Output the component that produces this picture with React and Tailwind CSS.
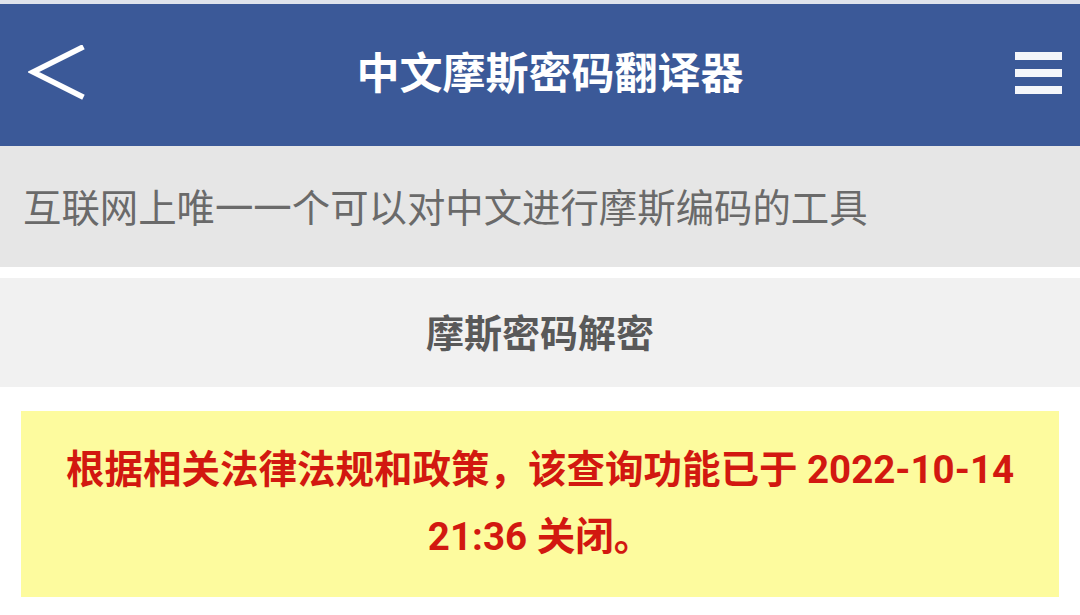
export default function App() {
  const cjk = { fontFamily: "Roboto, 'Noto Sans CJK SC', sans-serif" };
  return (
    <div className="w-[1080px] h-[615px] overflow-hidden bg-white" style={cjk}>
      <div className="h-[4px] bg-[#dfe3ec]" />
      {/* top bar */}
      <header className="h-[142px] bg-[#3b5998] flex items-center text-white">
        <div className="w-[100px] h-full flex items-center pl-[28px] pb-[4px]">
          <svg width="58" height="56" viewBox="0 0 58 56" fill="none">
            <path d="M53 3 L5 27 L53 51" stroke="#ffffff" strokeWidth="5.5" strokeLinecap="square" strokeLinejoin="miter" />
          </svg>
        </div>
        <h1 className="flex-1 text-center text-[43px] leading-[52px] font-bold tracking-[0px] pb-[3px]">
          中文摩斯密码翻译器
        </h1>
        <div className="w-[80px] h-full flex flex-col justify-center items-start gap-[9px] pl-[15px] pb-[4px]">
          <span className="block w-[47px] h-[8px] bg-[#f4f6fa]" />
          <span className="block w-[47px] h-[8px] bg-[#f4f6fa]" />
          <span className="block w-[47px] h-[8px] bg-[#f4f6fa]" />
        </div>
      </header>
      {/* tagline */}
      <div className="h-[121px] bg-[#e6e6e6] flex items-center pl-[23px] pt-[4px]">
        <p className="text-[38.4px] leading-[46px] text-[#6a6a6a]">互联网上唯一一个可以对中文进行摩斯编码的工具</p>
      </div>
      <div className="h-[11px]" />
      {/* section title */}
      <div className="h-[109px] bg-[#f1f1f1] flex items-center justify-center pt-[2px]">
        <h2 className="text-[38px] leading-[46px] font-bold text-[#595959]">摩斯密码解密</h2>
      </div>
      {/* notice */}
      <div className="pt-[24px] px-[21px]">
        <div className="h-[186px] bg-[#fdfb9e] flex items-center justify-center pb-[2px]">
          <p className="w-[960px] text-center text-[38.5px] leading-[67px] font-bold text-[#d21810]">
            根据相关法律法规和政策，该查询功能已于 2022-10-14 21:36 关闭。
          </p>
        </div>
      </div>
    </div>
  );
}
